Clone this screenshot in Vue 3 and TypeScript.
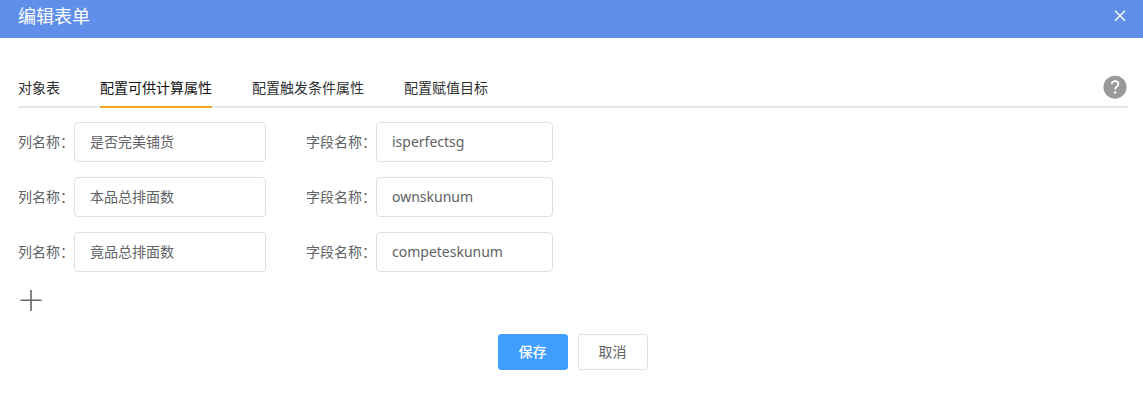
<script setup lang="ts">
import { ref } from 'vue'

interface FieldRow {
  column: string
  field: string
}

const tabs: string[] = ['对象表', '配置可供计算属性', '配置触发条件属性', '配置赋值目标']
const activeTab = ref<number>(1)

const rows = ref<FieldRow[]>([
  { column: '是否完美铺货', field: 'isperfectsg' },
  { column: '本品总排面数', field: 'ownskunum' },
  { column: '竟品总排面数', field: 'competeskunum' },
])

function addRow(): void {
  rows.value.push({ column: '', field: '' })
}
</script>

<template>
  <div class="dialog">
    <header class="header">
      <span class="title">编辑表单</span>
      <button class="close" type="button" aria-label="关闭">
        <svg width="12" height="12" viewBox="0 0 12 12">
          <path d="M1 0.7L11 10.7M11 0.7L1 10.7" fill="none" stroke="#fff" stroke-width="1.4" />
        </svg>
      </button>
    </header>

    <main class="body">
      <nav class="tabs">
        <button
          v-for="(tab, i) in tabs"
          :key="tab"
          type="button"
          class="tab"
          :class="{ active: i === activeTab }"
          @click="activeTab = i"
        >{{ tab }}</button>
        <svg class="help" width="24" height="24" viewBox="0 0 24 24">
          <circle cx="12" cy="12.2" r="11.5" fill="#999" />
          <path d="M8.8 9.3C8.8 7.2 10.1 6.1 12.1 6.1C14 6.1 15.4 7.2 15.4 8.9C15.4 11.2 12.2 11.6 12.2 14.4" fill="none" stroke="#fff" stroke-width="1.8" />
          <circle cx="12.1" cy="17.4" r="1.25" fill="#fff" />
        </svg>
      </nav>

      <div v-for="(row, i) in rows" :key="i" class="row">
        <label class="item">列名称：<input v-model="row.column" class="input column" /></label>
        <label class="item">字段名称：<input v-model="row.field" class="input field" /></label>
      </div>

      <button class="add" type="button" aria-label="添加" @click="addRow">
        <svg width="22" height="22" viewBox="0 0 22 22">
          <path d="M0.5 10.3H21.5M11 0V21" fill="none" stroke="#66666a" stroke-width="1.6" />
        </svg>
      </button>

      <footer class="footer">
        <button class="btn primary" type="button">保存</button>
        <button class="btn" type="button">取消</button>
      </footer>
    </main>
  </div>
</template>

<style>
body {
  margin: 0;
  background: #fff;
}
</style>

<style scoped>
.dialog {
  height: 400px;
  overflow: hidden;
  font-family: "Noto Sans", "Noto Sans CJK SC", sans-serif;
  font-size: 14px;
  color: #606266;
}
.dialog * {
  box-sizing: border-box;
}
button,
input {
  font: inherit;
  color: inherit;
  margin: 0;
}
button {
  padding: 0;
  border: 0;
  background: none;
  cursor: pointer;
}
svg {
  display: block;
}
.header {
  height: 38px;
  padding: 0 17px 6px 18px;
  display: flex;
  align-items: center;
  justify-content: space-between;
  background: #5f8fe9;
  color: #fff;
}
.title {
  font-size: 18px;
  line-height: 24px;
}
.body {
  padding: 30px 15px 0 18px;
}
.tabs {
  display: flex;
  gap: 40px;
  height: 40px;
  border-bottom: 2px solid #e4e7ed;
}
.tab {
  height: 40px;
  padding-top: 2px;
  border-bottom: 2px solid transparent;
  line-height: 36px;
  color: #303133;
  white-space: nowrap;
}
.tab.active {
  border-bottom-color: #f5a623;
  color: #111;
}
.help {
  margin: 7px 1px 0 auto;
}
.row {
  display: flex;
  gap: 40px;
  margin-top: 15px;
}
.row:first-of-type {
  margin-top: 14px;
}
.item {
  display: flex;
  line-height: 40px;
  white-space: nowrap;
}
.input {
  height: 40px;
  padding: 0 15px;
  border: 1px solid #dcdfe6;
  border-radius: 4px;
  background: #fff;
  outline: none;
}
.column {
  width: 192px;
}
.field {
  width: 177px;
}
.add {
  display: block;
  margin: 18px 0 0 2px;
}
.footer {
  display: flex;
  justify-content: center;
  gap: 10px;
  margin-top: 22px;
  padding-right: 1px;
}
.btn {
  width: 70px;
  height: 36px;
  border: 1px solid #dcdfe6;
  border-radius: 3px;
  background: #fff;
  line-height: 34px;
}
.btn.primary {
  border-color: #409eff;
  background: #409eff;
  color: #fff;
  font-weight: 500;
}
</style>
